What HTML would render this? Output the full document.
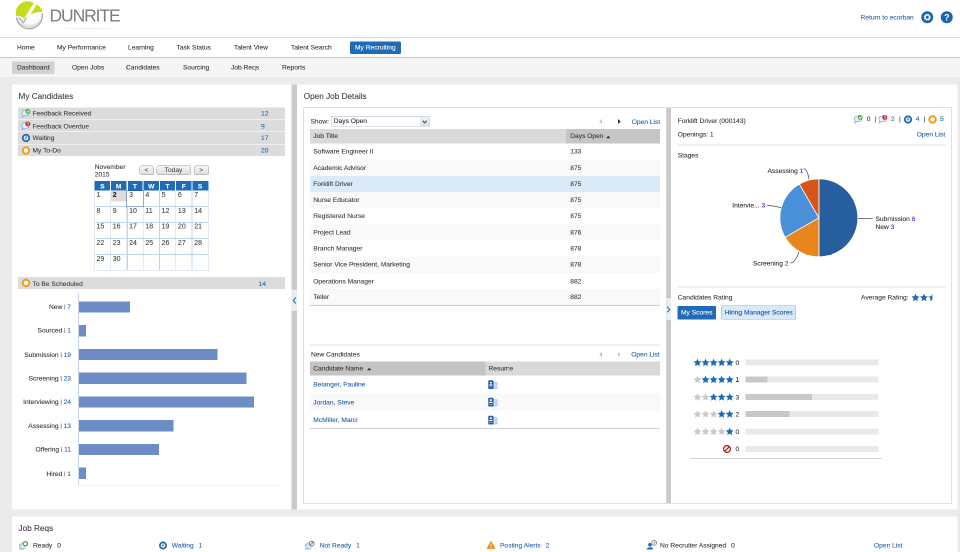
<!DOCTYPE html>
<html lang="en">
<head>
<meta charset="utf-8">
<title>DUNRITE - My Recruiting</title>
<style>
html,body{margin:0;padding:0;width:960px;height:552px;overflow:hidden;background:#ebebeb;}
body{font-family:"Liberation Sans",Arial,sans-serif;}
#root{position:absolute;left:0;top:0;width:1920px;height:1104px;transform:scale(.5);transform-origin:0 0;will-change:transform;
  font-size:13.3px;color:#3a3a3a;background:#ebebeb;overflow:hidden;}
#root *{box-sizing:border-box;}
.abs{position:absolute;}
.t{position:absolute;white-space:nowrap;line-height:16px;-webkit-text-stroke:0.18px;}
a,.lnk{color:#1f5ea8;text-decoration:none;}
/* header */
#hdr{left:0;top:0;width:1920px;height:74px;background:#fff;}
#nav1{left:0;top:74px;width:1920px;height:41.800px;background:#fff;border-top:2px solid #dcdcdc;border-bottom:1.500px solid #8f8f8f;}
#nav2{left:0;top:115.800px;width:1920px;height:38.200px;background:#f5f5f5;}
.n1{color:#343434;}
.n2{color:#343434;}
.panel{background:#fff;}
.row{position:absolute;left:36px;width:534px;height:23.600px;background:#dcdcdc;}
.row .t{top:4px;}
.ibox{border:2px solid #e0e0e0;background:#fff;}
.split{background:#c9c9c9;}
.title{font-size:16.4px;color:#404040;line-height:22px;}
.hl{background:#d9d9d9;height:2px;}
.calbtn{height:18.500px;border:1.500px solid #9a9a9a;border-radius:4px;background:linear-gradient(#f6f6f6,#dedede);text-align:center;font-size:13.3px;line-height:15px;color:#333;}
</style>
</head>
<body>
<div id="root">

<!-- HEADER -->
<div id="hdr" class="abs">
  <svg class="abs" style="left:24px;top:0px" width="70" height="64" viewBox="0 0 70 64">
    <defs>
      <radialGradient id="lg" cx="50%" cy="35%" r="62%"><stop offset="0" stop-color="#ffffff"/><stop offset="0.800" stop-color="#fbfbfb"/><stop offset="1" stop-color="#d6d6d6"/></radialGradient>
    </defs>
    <circle cx="34.400" cy="29.200" r="26.200" fill="url(#lg)"/>
    <path d="M9 36 A26 26 0 0 0 60.300 27" fill="none" stroke="#9c9c9c" stroke-width="2.200" stroke-linecap="round"/>
    <path d="M7.800 27 C6.500 14 18 3 30 2.500 C35 2.300 40 3.500 43.500 6 L24.500 37 C20 33 14 31 8.500 32 Z" fill="#c6da1e"/>
    <path d="M36.500 29 L49.500 9 C55.500 12 60 18 60.800 24.500 C52 23.500 44 25.500 36.500 29 Z" fill="#c6da1e"/>
    <path d="M13.500 35.500 L23 45 L29 35.500" fill="none" stroke="#b4b4b4" stroke-width="3" stroke-linejoin="miter"/>
  </svg>
  <div id="brand" class="abs" style="white-space:nowrap;left:99px;top:11px;font-size:35px;line-height:40px;color:#7c7c7c;letter-spacing:-2.2px;">DUNRITE</div>
  <div class="abs" style="left:112px;top:56px;width:130px;height:2px;background:linear-gradient(90deg,rgba(0,0,0,0),rgba(0,0,0,.10),rgba(0,0,0,0));"></div>
  <div class="t lnk" style="left:1721px;top:27px;color:#2a609f;">Return to ecorban</div>
  <svg class="abs" style="left:1842px;top:22px" width="25" height="25" viewBox="0 0 25 25">
    <circle cx="12.500" cy="12.500" r="12" fill="#1e63b0"/>
    <circle cx="12.500" cy="12.500" r="5.200" fill="none" stroke="#fff" stroke-width="3.400" stroke-dasharray="2.700 1.380"/>
    <circle cx="12.500" cy="12.500" r="4.200" fill="none" stroke="#fff" stroke-width="2.200"/>
  </svg>
  <svg class="abs" style="left:1881px;top:22px" width="25" height="25" viewBox="0 0 25 25">
    <circle cx="12.500" cy="12.500" r="12" fill="#1e63b0"/>
    <text x="12.500" y="19" text-anchor="middle" font-family="Liberation Sans, sans-serif" font-weight="bold" font-size="18" fill="#fff">?</text>
  </svg>
</div>

<!-- NAV 1 -->
<div id="nav1" class="abs">
  <div class="t n1" style="top:11px;left:34px">Home</div>
  <div class="t n1" style="top:11px;left:114px">My Performance</div>
  <div class="t n1" style="top:11px;left:256px">Learning</div>
  <div class="t n1" style="top:11px;left:353px">Task Status</div>
  <div class="t n1" style="top:11px;left:468px">Talent View</div>
  <div class="t n1" style="top:11px;left:582px">Talent Search</div>
  <div class="abs" style="left:700px;top:7px;width:102px;height:25px;background:#1e6bb8;border-radius:3px;"></div>
  <div class="t n1" style="top:11px;left:710px;color:#fff;">My Recruiting</div>
</div>

<!-- NAV 2 -->
<div id="nav2" class="abs">
  <div class="abs" style="left:24px;top:7px;width:85px;height:25px;background:#d2d2d2;border-radius:2px;"></div>
  <div class="t n2" style="top:11px;left:34px">Dashboard</div>
  <div class="t n2" style="top:11px;left:144px">Open Jobs</div>
  <div class="t n2" style="top:11px;left:252px">Candidates</div>
  <div class="t n2" style="top:11px;left:366px">Sourcing</div>
  <div class="t n2" style="top:11px;left:462px">Job Reqs</div>
  <div class="t n2" style="top:11px;left:564px">Reports</div>
</div>

<!-- LEFT PANEL -->
<div id="left" class="abs panel" style="left:24px;top:169px;width:559px;height:850px;">
<div class="t title" style="left:13px;top:12px;">My Candidates</div>
<div class="row" style="left:12px;top:46px;"><svg class="abs" style="left:5px;top:1px" width="22" height="21" viewBox="0 0 22 21"><path d="M3 9.500 C3 5.500 6.500 4 10 4 C14.500 4 17 6.500 17 10 C17 14 13.500 15.500 10 15.500 C9 15.500 8 15.400 7.200 15.100 L3.500 18 L4.600 14 C3.500 13 3 11.500 3 9.500 Z" fill="#e3eefa" stroke="#7fa9d8" stroke-width="1.500"/><circle cx="14.600" cy="6.800" r="4.900" fill="#4cab2d"/><path d="M12.300 6.600 L14.300 8.600 L17.700 4.700" fill="none" stroke="#fff" stroke-width="1.800"/></svg><div class="t" style="left:29px;top:4px;">Feedback Received</div><div class="t lnk" style="left:486px;top:4px;">12</div></div>
<div class="row" style="left:12px;top:70.5px;"><svg class="abs" style="left:5px;top:1px" width="22" height="21" viewBox="0 0 22 21"><path d="M3 9.500 C3 5.500 6.500 4 10 4 C14.500 4 17 6.500 17 10 C17 14 13.500 15.500 10 15.500 C9 15.500 8 15.400 7.200 15.100 L3.500 18 L4.600 14 C3.500 13 3 11.500 3 9.500 Z" fill="#e3eefa" stroke="#7fa9d8" stroke-width="1.500"/><circle cx="14.600" cy="6.800" r="4.900" fill="#c9211e"/><rect x="14.100" y="3" width="1.900" height="4.400" fill="#fff"/><rect x="14.100" y="8.300" width="1.900" height="1.800" fill="#fff"/></svg><div class="t" style="left:29px;top:5.5px;">Feedback Overdue</div><div class="t lnk" style="left:486px;top:5.5px;">9</div></div>
<div class="row" style="left:12px;top:95px;"><svg class="abs" style="left:6px;top:2px" width="20" height="20" viewBox="0 0 20 20"><circle cx="10" cy="10" r="6.500" fill="#eef5fc" stroke="#2563a8" stroke-width="3.500"/><path d="M10.300 6 L10.300 10.600 L7.500 10.600" fill="none" stroke="#2563a8" stroke-width="1.700"/></svg><div class="t" style="left:29px;top:4px;">Waiting</div><div class="t lnk" style="left:486px;top:4px;">17</div></div>
<div class="row" style="left:12px;top:119.5px;"><svg class="abs" style="left:6px;top:2px" width="20" height="20" viewBox="0 0 20 20"><circle cx="10" cy="10" r="6.500" fill="#fff" stroke="#f39a1a" stroke-width="3.800"/></svg><div class="t" style="left:29px;top:4.5px;">My To-Do</div><div class="t lnk" style="left:486px;top:4.5px;">20</div></div>
<div class="t" style="left:165.500px;top:157px;color:#363636;">November</div>
<div class="t" style="left:165.500px;top:171.500px;color:#363636;">2015</div>
<div class="abs calbtn" style="left:254.5px;top:162px;width:29px;">&lt;</div>
<div class="abs calbtn" style="left:288.5px;top:162px;width:69px;">Today</div>
<div class="abs calbtn" style="left:363.5px;top:162px;width:30px;">&gt;</div>
<div class="abs" style="left:164.5px;top:193px;width:228.500px;height:19px;background:#1e6bb8;"></div>
<div class="t" style="left:164.5px;top:195.5px;width:32.5714px;text-align:center;color:#fff;font-weight:bold;font-size:13.300px;">S</div>
<div class="t" style="left:197.071px;top:195.5px;width:32.5714px;text-align:center;color:#fff;font-weight:bold;font-size:13.300px;">M</div>
<div class="abs" style="left:196.071px;top:193px;width:2px;height:19px;background:#fff;"></div>
<div class="t" style="left:229.643px;top:195.5px;width:32.5714px;text-align:center;color:#fff;font-weight:bold;font-size:13.300px;">T</div>
<div class="abs" style="left:228.643px;top:193px;width:2px;height:19px;background:#fff;"></div>
<div class="t" style="left:262.214px;top:195.5px;width:32.5714px;text-align:center;color:#fff;font-weight:bold;font-size:13.300px;">W</div>
<div class="abs" style="left:261.214px;top:193px;width:2px;height:19px;background:#fff;"></div>
<div class="t" style="left:294.786px;top:195.5px;width:32.5714px;text-align:center;color:#fff;font-weight:bold;font-size:13.300px;">T</div>
<div class="abs" style="left:293.786px;top:193px;width:2px;height:19px;background:#fff;"></div>
<div class="t" style="left:327.357px;top:195.5px;width:32.5714px;text-align:center;color:#fff;font-weight:bold;font-size:13.300px;">F</div>
<div class="abs" style="left:326.357px;top:193px;width:2px;height:19px;background:#fff;"></div>
<div class="t" style="left:359.929px;top:195.5px;width:32.5714px;text-align:center;color:#fff;font-weight:bold;font-size:13.300px;">S</div>
<div class="abs" style="left:358.929px;top:193px;width:2px;height:19px;background:#fff;"></div>
<div class="abs" style="left:164.5px;top:212px;width:229px;height:159.5px;border:1.500px solid #c3d4ea;border-top:none;"></div>
<div class="abs" style="left:196.571px;top:212px;width:1.500px;height:159.5px;background:#c3d4ea;"></div>
<div class="abs" style="left:229.143px;top:212px;width:1.500px;height:159.5px;background:#c3d4ea;"></div>
<div class="abs" style="left:261.714px;top:212px;width:1.500px;height:159.5px;background:#c3d4ea;"></div>
<div class="abs" style="left:294.286px;top:212px;width:1.500px;height:159.5px;background:#c3d4ea;"></div>
<div class="abs" style="left:326.857px;top:212px;width:1.500px;height:159.5px;background:#c3d4ea;"></div>
<div class="abs" style="left:359.429px;top:212px;width:1.500px;height:159.5px;background:#c3d4ea;"></div>
<div class="abs" style="left:164.5px;top:243.4px;width:228px;height:1.500px;background:#c3d4ea;"></div>
<div class="abs" style="left:164.5px;top:275.3px;width:228px;height:1.500px;background:#c3d4ea;"></div>
<div class="abs" style="left:164.5px;top:307.2px;width:228px;height:1.500px;background:#c3d4ea;"></div>
<div class="abs" style="left:164.5px;top:339.1px;width:228px;height:1.500px;background:#c3d4ea;"></div>
<div class="abs" style="left:198.071px;top:212.5px;width:31.0714px;height:21.5px;background:#dcdcdc;"></div>
<div class="abs" style="left:228.643px;top:211.5px;width:34.5714px;height:33.4px;border:1.600px solid #2c5897;background:#fff;"></div>
<div class="t" style="left:169px;top:211.5px;font-size:14px;color:#444;">1</div>
<div class="t" style="left:201.571px;top:211.5px;font-size:14px;color:#444;font-weight:bold;color:#222;">2</div>
<div class="t" style="left:234.143px;top:211.5px;font-size:14px;color:#444;">3</div>
<div class="t" style="left:266.714px;top:211.5px;font-size:14px;color:#444;">4</div>
<div class="t" style="left:299.286px;top:211.5px;font-size:14px;color:#444;">5</div>
<div class="t" style="left:331.857px;top:211.5px;font-size:14px;color:#444;">6</div>
<div class="t" style="left:364.429px;top:211.5px;font-size:14px;color:#444;">7</div>
<div class="t" style="left:169px;top:244.4px;font-size:14px;color:#444;">8</div>
<div class="t" style="left:201.571px;top:244.4px;font-size:14px;color:#444;">9</div>
<div class="t" style="left:234.143px;top:244.4px;font-size:14px;color:#444;">10</div>
<div class="t" style="left:266.714px;top:244.4px;font-size:14px;color:#444;">11</div>
<div class="t" style="left:299.286px;top:244.4px;font-size:14px;color:#444;">12</div>
<div class="t" style="left:331.857px;top:244.4px;font-size:14px;color:#444;">13</div>
<div class="t" style="left:364.429px;top:244.4px;font-size:14px;color:#444;">14</div>
<div class="t" style="left:169px;top:275.3px;font-size:14px;color:#444;">15</div>
<div class="t" style="left:201.571px;top:275.3px;font-size:14px;color:#444;">16</div>
<div class="t" style="left:234.143px;top:275.3px;font-size:14px;color:#444;">17</div>
<div class="t" style="left:266.714px;top:275.3px;font-size:14px;color:#444;">18</div>
<div class="t" style="left:299.286px;top:275.3px;font-size:14px;color:#444;">19</div>
<div class="t" style="left:331.857px;top:275.3px;font-size:14px;color:#444;">20</div>
<div class="t" style="left:364.429px;top:275.3px;font-size:14px;color:#444;">21</div>
<div class="t" style="left:169px;top:308.2px;font-size:14px;color:#444;">22</div>
<div class="t" style="left:201.571px;top:308.2px;font-size:14px;color:#444;">23</div>
<div class="t" style="left:234.143px;top:308.2px;font-size:14px;color:#444;">24</div>
<div class="t" style="left:266.714px;top:308.2px;font-size:14px;color:#444;">25</div>
<div class="t" style="left:299.286px;top:308.2px;font-size:14px;color:#444;">26</div>
<div class="t" style="left:331.857px;top:308.2px;font-size:14px;color:#444;">27</div>
<div class="t" style="left:364.429px;top:308.2px;font-size:14px;color:#444;">28</div>
<div class="t" style="left:169px;top:340.1px;font-size:14px;color:#444;">29</div>
<div class="t" style="left:201.571px;top:340.1px;font-size:14px;color:#444;">30</div>
<div class="row" style="left:12px;top:385px;height:23.500px;"><svg class="abs" style="left:6px;top:2px" width="20" height="20" viewBox="0 0 20 20"><circle cx="10" cy="10" r="6.500" fill="#fff" stroke="#f39a1a" stroke-width="3.800"/></svg><div class="t" style="left:29px;top:5.500px;">To Be Scheduled</div><div class="t lnk" style="left:481px;top:5.500px;">14</div></div>
<div class="abs" style="left:132px;top:417px;width:1.500px;height:385px;background:#c9d6e8;"></div>
<div class="abs" style="left:132px;top:800.500px;width:406px;height:1.500px;background:#d5deeb;"></div>
<div class="abs" style="left:133.500px;top:433.6px;width:102.2px;height:22.400px;background:#6c8dc5;"></div>
<div class="t" style="right:441px;top:436.8px;color:#333;">New <span style="font-size:10px;position:relative;top:-1px;">|</span> <span class="lnk">7</span></div>
<div class="abs" style="left:133.500px;top:481.15px;width:14.6px;height:22.400px;background:#6c8dc5;"></div>
<div class="t" style="right:441px;top:484.35px;color:#333;">Sourced <span style="font-size:10px;position:relative;top:-1px;">|</span> <span class="lnk">1</span></div>
<div class="abs" style="left:133.500px;top:528.7px;width:277.4px;height:22.400px;background:#6c8dc5;"></div>
<div class="t" style="right:441px;top:532.9px;color:#333;">Submission <span style="font-size:10px;position:relative;top:-1px;">|</span> <span class="lnk">19</span></div>
<div class="abs" style="left:133.500px;top:576.25px;width:335.8px;height:22.400px;background:#6c8dc5;"></div>
<div class="t" style="right:441px;top:580.45px;color:#333;">Screening <span style="font-size:10px;position:relative;top:-1px;">|</span> <span class="lnk">23</span></div>
<div class="abs" style="left:133.500px;top:623.8px;width:350.4px;height:22.400px;background:#6c8dc5;"></div>
<div class="t" style="right:441px;top:627px;color:#333;">Interviewing <span style="font-size:10px;position:relative;top:-1px;">|</span> <span class="lnk">24</span></div>
<div class="abs" style="left:133.500px;top:671.35px;width:189.8px;height:22.400px;background:#6c8dc5;"></div>
<div class="t" style="right:441px;top:674.55px;color:#333;">Assessing <span style="font-size:10px;position:relative;top:-1px;">|</span> <span class="lnk">13</span></div>
<div class="abs" style="left:133.500px;top:718.9px;width:160.6px;height:22.400px;background:#6c8dc5;"></div>
<div class="t" style="right:441px;top:722.1px;color:#333;">Offering <span style="font-size:10px;position:relative;top:-1px;">|</span> <span class="lnk">11</span></div>
<div class="abs" style="left:133.500px;top:766.45px;width:14.6px;height:22.400px;background:#6c8dc5;"></div>
<div class="t" style="right:441px;top:770.65px;color:#333;">Hired <span style="font-size:10px;position:relative;top:-1px;">|</span> <span class="lnk">1</span></div>
</div>

<!-- SPLITTER 1 -->
<div class="abs split" style="left:583px;top:169px;width:11px;height:850px;"></div>
<div class="abs" style="left:583px;top:578px;width:11px;height:45px;background:#ececec;border-top:1.500px solid #bdbdbd;border-bottom:1.500px solid #bdbdbd;"></div>
<svg class="abs" style="left:584px;top:592px" width="10" height="18" viewBox="0 0 10 18"><path d="M7.500 3 L2.500 9 L7.500 15" fill="none" stroke="#1e6bb8" stroke-width="2"/></svg>
<!-- MIDDLE PANEL -->
<div id="mid" class="abs panel" style="left:594px;top:169px;width:1321px;height:850px;"></div>
<div class="t title" style="left:607.500px;top:181px;">Open Job Details</div>
<div class="abs ibox" style="left:606px;top:214px;width:728px;height:794px;"></div>
<div class="t" style="left:621px;top:234.5px;">Show:</div>
<div class="abs" style="left:662px;top:232px;width:198px;height:21px;border:1.500px solid #c3c8d2;border-top-color:#a9afc2;background:#fff;"></div>
<div class="t" style="left:667.500px;top:234px;color:#2c2c2c;">Days Open</div>
<div class="abs" style="left:841px;top:233.500px;width:17.500px;height:18px;background:linear-gradient(#f1f1f4,#dcdde2);border-left:1px solid #cfd2da;"></div>
<svg class="abs" style="left:843px;top:238.500px" width="13" height="10" viewBox="0 0 13 10"><path d="M2.500 2.500 L6.500 6.800 L10.500 2.500" fill="none" stroke="#34508c" stroke-width="2.400"/></svg>
<svg class="abs" style="left:1195px;top:236px" width="12" height="14" viewBox="0 0 12 14"><path d="M9 2 L3.500 7 L9 12 Z" fill="#c4c4c4"/></svg>
<svg class="abs" style="left:1233px;top:236px" width="12" height="14" viewBox="0 0 12 14"><path d="M3 2 L8.500 7 L3 12 Z" fill="#333"/></svg>
<div class="t lnk" style="left:1263.500px;top:235.8px;">Open List</div>
<div class="abs" style="left:620px;top:258.300px;width:511.500px;height:28.800px;background:#d9d9d9;"></div>
<div class="abs" style="left:1131.500px;top:258.300px;width:188.500px;height:28.800px;background:#c5c5c5;"></div>
<div class="t" style="left:626.500px;top:264px;color:#363636;">Job Title</div>
<div class="t" style="left:1140.500px;top:264px;color:#363636;">Days Open</div>
<svg class="abs" style="left:1211px;top:270px" width="11" height="8" viewBox="0 0 11 8"><path d="M1 6.500 L5.500 1.500 L10 6.500 Z" fill="#333"/></svg>
<div class="abs" style="left:620px;top:286.90px;width:700px;height:32.36px;background:#fff;"></div>
<div class="t" style="left:626.500px;top:294.90px;color:#3a3a3a;">Software Engineer II</div>
<div class="t" style="left:1140.500px;top:294.90px;color:#3a3a3a;">133</div>
<div class="abs" style="left:620px;top:319.26px;width:700px;height:32.36px;background:#f9f9f9;"></div>
<div class="t" style="left:626.500px;top:328.26px;color:#3a3a3a;">Academic Advisor</div>
<div class="t" style="left:1140.500px;top:328.26px;color:#3a3a3a;">875</div>
<div class="abs" style="left:620px;top:351.62px;width:700px;height:32.36px;background:#dbeaf9;"></div>
<div class="t" style="left:626.500px;top:359.62px;color:#3a3a3a;">Forklift Driver</div>
<div class="t" style="left:1140.500px;top:359.62px;color:#3a3a3a;">875</div>
<div class="abs" style="left:620px;top:383.98px;width:700px;height:32.36px;background:#f9f9f9;"></div>
<div class="t" style="left:626.500px;top:391.98px;color:#3a3a3a;">Nurse Educator</div>
<div class="t" style="left:1140.500px;top:391.98px;color:#3a3a3a;">875</div>
<div class="abs" style="left:620px;top:416.34px;width:700px;height:32.36px;background:#fff;"></div>
<div class="t" style="left:626.500px;top:424.34px;color:#3a3a3a;">Registered Nurse</div>
<div class="t" style="left:1140.500px;top:424.34px;color:#3a3a3a;">875</div>
<div class="abs" style="left:620px;top:448.70px;width:700px;height:32.36px;background:#f9f9f9;"></div>
<div class="t" style="left:626.500px;top:456.70px;color:#3a3a3a;">Project Lead</div>
<div class="t" style="left:1140.500px;top:456.70px;color:#3a3a3a;">876</div>
<div class="abs" style="left:620px;top:481.06px;width:700px;height:32.36px;background:#fff;"></div>
<div class="t" style="left:626.500px;top:489.06px;color:#3a3a3a;">Branch Manager</div>
<div class="t" style="left:1140.500px;top:489.06px;color:#3a3a3a;">878</div>
<div class="abs" style="left:620px;top:513.42px;width:700px;height:32.36px;background:#f9f9f9;"></div>
<div class="t" style="left:626.500px;top:521.42px;color:#3a3a3a;">Senior Vice President, Marketing</div>
<div class="t" style="left:1140.500px;top:521.42px;color:#3a3a3a;">878</div>
<div class="abs" style="left:620px;top:545.78px;width:700px;height:32.36px;background:#fff;"></div>
<div class="t" style="left:626.500px;top:554.78px;color:#3a3a3a;">Operations Manager</div>
<div class="t" style="left:1140.500px;top:554.78px;color:#3a3a3a;">882</div>
<div class="abs" style="left:620px;top:578.14px;width:700px;height:32.36px;background:#f9f9f9;"></div>
<div class="t" style="left:626.500px;top:586.14px;color:#3a3a3a;">Teller</div>
<div class="t" style="left:1140.500px;top:586.14px;color:#3a3a3a;">882</div>
<div class="abs" style="left:620px;top:610px;width:700px;height:2px;background:#cfcfcf;"></div>
<div class="abs" style="left:620px;top:689px;width:700px;height:2px;background:#dedede;"></div>
<div class="t" style="left:622px;top:700.500px;color:#363636;">New Candidates</div>
<svg class="abs" style="left:1195px;top:701.5px" width="12" height="14" viewBox="0 0 12 14"><path d="M9 2 L3.500 7 L9 12 Z" fill="#bdbdbd"/></svg>
<svg class="abs" style="left:1233px;top:701.5px" width="12" height="14" viewBox="0 0 12 14"><path d="M3 2 L8.500 7 L3 12 Z" fill="#c9c9c9"/></svg>
<div class="t lnk" style="left:1262.500px;top:700.5px;">Open List</div>
<div class="abs" style="left:620px;top:722.500px;width:351px;height:28.500px;background:#c3c3c3;"></div>
<div class="abs" style="left:971px;top:722.500px;width:349px;height:28.500px;background:#d9d9d9;"></div>
<div class="t" style="left:626.500px;top:729.200px;color:#363636;">Candidate Name</div>
<svg class="abs" style="left:733px;top:734px" width="11" height="8" viewBox="0 0 11 8"><path d="M1 6.500 L5.500 1.500 L10 6.500 Z" fill="#333"/></svg>
<div class="t" style="left:977px;top:729.200px;color:#363636;">Resume</div>
<div class="abs" style="left:620px;top:751.00px;width:700px;height:35.500px;background:#fff;"></div>
<div class="t lnk" style="left:626.500px;top:761.3px;">Belanger, Pauline</div>
<svg class="abs" style="left:975.500px;top:759.50px" width="20" height="20" viewBox="0 0 20 20"><rect x="9" y="3.500" width="9.800" height="14.300" rx="1" fill="#a2c5ef"/><rect x="12.300" y="5" width="1.300" height="11.500" fill="#e9f1fb"/><rect x="15.300" y="5" width="1.300" height="11.500" fill="#e9f1fb"/><rect x="0.500" y="0.500" width="10.500" height="17.500" rx="1.600" fill="#2560b0"/><circle cx="5.700" cy="5.300" r="2" fill="#fff"/><rect x="2.500" y="8.800" width="6.500" height="2.300" fill="#fff"/><rect x="2.500" y="13.300" width="6.500" height="1.200" fill="#8fb4e6"/></svg>
<div class="abs" style="left:620px;top:786.50px;width:700px;height:35.500px;background:#f9f9f9;"></div>
<div class="t lnk" style="left:626.500px;top:796.8px;">Jordan, Steve</div>
<svg class="abs" style="left:975.500px;top:795.00px" width="20" height="20" viewBox="0 0 20 20"><rect x="9" y="3.500" width="9.800" height="14.300" rx="1" fill="#a2c5ef"/><rect x="12.300" y="5" width="1.300" height="11.500" fill="#e9f1fb"/><rect x="15.300" y="5" width="1.300" height="11.500" fill="#e9f1fb"/><rect x="0.500" y="0.500" width="10.500" height="17.500" rx="1.600" fill="#2560b0"/><circle cx="5.700" cy="5.300" r="2" fill="#fff"/><rect x="2.500" y="8.800" width="6.500" height="2.300" fill="#fff"/><rect x="2.500" y="13.300" width="6.500" height="1.200" fill="#8fb4e6"/></svg>
<div class="abs" style="left:620px;top:822.00px;width:700px;height:35.500px;background:#fff;"></div>
<div class="t lnk" style="left:626.500px;top:832.3px;">McMiller, Marci</div>
<svg class="abs" style="left:975.500px;top:830.50px" width="20" height="20" viewBox="0 0 20 20"><rect x="9" y="3.500" width="9.800" height="14.300" rx="1" fill="#a2c5ef"/><rect x="12.300" y="5" width="1.300" height="11.500" fill="#e9f1fb"/><rect x="15.300" y="5" width="1.300" height="11.500" fill="#e9f1fb"/><rect x="0.500" y="0.500" width="10.500" height="17.500" rx="1.600" fill="#2560b0"/><circle cx="5.700" cy="5.300" r="2" fill="#fff"/><rect x="2.500" y="8.800" width="6.500" height="2.300" fill="#fff"/><rect x="2.500" y="13.300" width="6.500" height="1.200" fill="#8fb4e6"/></svg>
<div class="abs" style="left:620px;top:856px;width:700px;height:2px;background:#cfcfcf;"></div>
<div class="abs split" style="left:1332.500px;top:215px;width:9.500px;height:792px;"></div>
<div class="abs" style="left:1332.500px;top:595px;width:9.500px;height:45.500px;background:#ececec;border-top:1.500px solid #bdbdbd;border-bottom:1.500px solid #bdbdbd;"></div>
<svg class="abs" style="left:1332px;top:610px" width="10" height="18" viewBox="0 0 10 18"><path d="M2.500 3.500 L7.500 9 L2.500 14.500" fill="none" stroke="#1e6bb8" stroke-width="2"/></svg>
<!-- RIGHT BOX -->
<div class="abs ibox" style="left:1342px;top:214px;width:562px;height:794px;border-left:none;"></div>
<div class="t" style="left:1355.500px;top:234px;color:#363636;">Forklift Driver (000143)</div>
<div class="t" style="left:1355.500px;top:260.700px;color:#363636;">Openings: 1</div>
<div class="t lnk" style="left:1833.500px;top:261px;">Open List</div>
<div class="abs" style="left:1355px;top:289px;width:536px;height:2px;background:#dedede;"></div>
<div class="t" style="left:1355.500px;top:303.2px;color:#363636;">Stages</div>
<svg class="abs" style="left:1706px;top:228px" width="22" height="21" viewBox="0 0 22 21"><path d="M3 9.500 C3 5.500 6.500 4 10 4 C14.500 4 17 6.500 17 10 C17 14 13.500 15.500 10 15.500 C9 15.500 8 15.400 7.200 15.100 L3.500 18 L4.600 14 C3.500 13 3 11.500 3 9.500 Z" fill="#e3eefa" stroke="#7fa9d8" stroke-width="1.500"/><circle cx="14.600" cy="6.800" r="4.900" fill="#4cab2d"/><path d="M12.300 6.600 L14.300 8.600 L17.700 4.700" fill="none" stroke="#fff" stroke-width="1.800"/></svg>
<div class="t" style="left:1733.500px;top:230.3px;color:#363636;">0</div>
<div class="t" style="left:1749px;top:229.5px;color:#333;">|</div>
<svg class="abs" style="left:1755px;top:228px" width="22" height="21" viewBox="0 0 22 21"><path d="M3 9.500 C3 5.500 6.500 4 10 4 C14.500 4 17 6.500 17 10 C17 14 13.500 15.500 10 15.500 C9 15.500 8 15.400 7.200 15.100 L3.500 18 L4.600 14 C3.500 13 3 11.500 3 9.500 Z" fill="#e3eefa" stroke="#7fa9d8" stroke-width="1.500"/><circle cx="14.600" cy="6.800" r="4.900" fill="#c9211e"/><rect x="14.100" y="3" width="1.900" height="4.400" fill="#fff"/><rect x="14.100" y="8.300" width="1.900" height="1.800" fill="#fff"/></svg>
<div class="t lnk" style="left:1782px;top:230.3px;">2</div>
<div class="t" style="left:1798px;top:229.5px;color:#333;">|</div>
<svg class="abs" style="left:1806px;top:228.500px" width="20" height="20" viewBox="0 0 20 20"><circle cx="10" cy="10" r="6.500" fill="#eef5fc" stroke="#2563a8" stroke-width="3.500"/><path d="M10.300 6 L10.300 10.600 L7.500 10.600" fill="none" stroke="#2563a8" stroke-width="1.700"/></svg>
<div class="t lnk" style="left:1831.500px;top:230.3px;">4</div>
<div class="t" style="left:1847px;top:229.5px;color:#333;">|</div>
<svg class="abs" style="left:1855px;top:228.500px" width="20" height="20" viewBox="0 0 20 20"><circle cx="10" cy="10" r="6.500" fill="#fff" stroke="#f39a1a" stroke-width="3.800"/></svg>
<div class="t lnk" style="left:1880px;top:230.3px;">5</div>
<svg class="abs" style="left:1341px;top:300px" width="563" height="270" viewBox="1341 300 563 270">
<path d="M1637.80 435.60 L1637.80 357.60 A78 78 0 0 1 1637.80 513.60 Z" fill="#265e9e" stroke="#fff" stroke-width="1.600" stroke-linejoin="round"/>
<path d="M1637.80 435.60 L1637.80 513.60 A78 78 0 0 1 1570.25 474.60 Z" fill="#e8851c" stroke="#fff" stroke-width="1.600" stroke-linejoin="round"/>
<path d="M1637.80 435.60 L1570.25 474.60 A78 78 0 0 1 1598.80 368.05 Z" fill="#4a90d9" stroke="#fff" stroke-width="1.600" stroke-linejoin="round"/>
<path d="M1637.80 435.60 L1598.80 368.05 A78 78 0 0 1 1637.80 357.60 Z" fill="#d4561a" stroke="#fff" stroke-width="1.600" stroke-linejoin="round"/>
<path d="M1716 437 L1745 437" fill="none" stroke="#444" stroke-width="1.400"/>
<path d="M1607 337.500 C1613 337.500 1616 345 1618 359" fill="none" stroke="#444" stroke-width="1.400"/>
<path d="M1534 410 L1562 415" fill="none" stroke="#444" stroke-width="1.400"/>
<path d="M1581 526 Q1590 526 1598 504" fill="none" stroke="#444" stroke-width="1.400"/>
</svg>
<div class="t" style="left:1751px;top:429.500px;color:#2c2c2c;">Submission <span style="color:#3333dd">6</span></div>
<div class="t" style="left:1751px;top:446px;color:#2c2c2c;">New <span style="color:#3333dd">3</span></div>
<div class="t" style="left:1535px;top:334px;color:#2c2c2c;">Assessing <span style="color:#3333dd">1</span></div>
<div class="t" style="left:1464.500px;top:402.500px;color:#2c2c2c;">Intervie... <span style="color:#3333dd">3</span></div>
<div class="t" style="left:1506px;top:519px;color:#2c2c2c;">Screening <span style="color:#3333dd">2</span></div>
<div class="abs" style="left:1355px;top:572.500px;width:536px;height:2px;background:#dedede;"></div>
<div class="t" style="left:1355.500px;top:587px;color:#363636;">Candidates Rating</div>
<div class="t" style="left:1722px;top:587px;color:#363636;">Average Rating:</div>
<svg class="abs" style="left:1822.500px;top:587px" width="52" height="18" viewBox="0 0 52 18"><path d="M8.00 0.30 L10.35 5.36 L15.89 6.04 L11.80 9.84 L12.88 15.31 L8.00 12.60 L3.12 15.31 L4.20 9.84 L0.11 6.04 L5.65 5.36 Z" fill="#1e6bb8"/><path transform="translate(16.900 0)" d="M8.00 0.30 L10.35 5.36 L15.89 6.04 L11.80 9.84 L12.88 15.31 L8.00 12.60 L3.12 15.31 L4.20 9.84 L0.11 6.04 L5.65 5.36 Z" fill="#1e6bb8"/><path transform="translate(33.800 0)" d="M8.00 0.30 L8.00 12.60 L3.12 15.31 L4.20 9.84 L0.11 6.04 L5.65 5.36 Z" fill="#1e6bb8"/></svg>
<div class="abs" style="left:1355px;top:611.500px;width:77px;height:27px;background:#1e6bb8;border-radius:2px;"></div>
<div class="t" style="left:1362px;top:617px;color:#fff;">My Scores</div>
<div class="abs" style="left:1441.500px;top:611px;width:150.500px;height:28px;background:#d8e9fa;border:1.500px solid #82b3e6;border-radius:3px;"></div>
<div class="t" style="left:1449.500px;top:617px;color:#1d4f8c;">Hiring Manager Scores</div>
<div class="abs" style="left:1490.500px;top:718.80px;width:266.500px;height:12px;background:#e9e9e9;"></div>
<div class="t" style="left:1471px;top:717.8px;color:#363636;font-size:13.300px;">0</div>
<svg class="abs" style="left:1386.500px;top:716.60px" width="82" height="18" viewBox="0 0 82 18"><path transform="translate(0 0)" d="M8.00 0.30 L10.35 5.36 L15.89 6.04 L11.80 9.84 L12.88 15.31 L8.00 12.60 L3.12 15.31 L4.20 9.84 L0.11 6.04 L5.65 5.36 Z" fill="#1e6bb8"/><path transform="translate(16.1 0)" d="M8.00 0.30 L10.35 5.36 L15.89 6.04 L11.80 9.84 L12.88 15.31 L8.00 12.60 L3.12 15.31 L4.20 9.84 L0.11 6.04 L5.65 5.36 Z" fill="#1e6bb8"/><path transform="translate(32.2 0)" d="M8.00 0.30 L10.35 5.36 L15.89 6.04 L11.80 9.84 L12.88 15.31 L8.00 12.60 L3.12 15.31 L4.20 9.84 L0.11 6.04 L5.65 5.36 Z" fill="#1e6bb8"/><path transform="translate(48.3 0)" d="M8.00 0.30 L10.35 5.36 L15.89 6.04 L11.80 9.84 L12.88 15.31 L8.00 12.60 L3.12 15.31 L4.20 9.84 L0.11 6.04 L5.65 5.36 Z" fill="#1e6bb8"/><path transform="translate(64.4 0)" d="M8.00 0.30 L10.35 5.36 L15.89 6.04 L11.80 9.84 L12.88 15.31 L8.00 12.60 L3.12 15.31 L4.20 9.84 L0.11 6.04 L5.65 5.36 Z" fill="#1e6bb8"/></svg>
<div class="abs" style="left:1490.500px;top:753.36px;width:266.500px;height:12px;background:#e9e9e9;"></div>
<div class="abs" style="left:1490.500px;top:753.36px;width:44.40px;height:12px;background:#c8c8c8;"></div>
<div class="t" style="left:1471px;top:751.36px;color:#363636;font-size:13.300px;">1</div>
<svg class="abs" style="left:1386.500px;top:751.16px" width="82" height="18" viewBox="0 0 82 18"><path transform="translate(0 0)" d="M8.00 0.30 L10.35 5.36 L15.89 6.04 L11.80 9.84 L12.88 15.31 L8.00 12.60 L3.12 15.31 L4.20 9.84 L0.11 6.04 L5.65 5.36 Z" fill="#c9c9c9"/><path transform="translate(16.1 0)" d="M8.00 0.30 L10.35 5.36 L15.89 6.04 L11.80 9.84 L12.88 15.31 L8.00 12.60 L3.12 15.31 L4.20 9.84 L0.11 6.04 L5.65 5.36 Z" fill="#1e6bb8"/><path transform="translate(32.2 0)" d="M8.00 0.30 L10.35 5.36 L15.89 6.04 L11.80 9.84 L12.88 15.31 L8.00 12.60 L3.12 15.31 L4.20 9.84 L0.11 6.04 L5.65 5.36 Z" fill="#1e6bb8"/><path transform="translate(48.3 0)" d="M8.00 0.30 L10.35 5.36 L15.89 6.04 L11.80 9.84 L12.88 15.31 L8.00 12.60 L3.12 15.31 L4.20 9.84 L0.11 6.04 L5.65 5.36 Z" fill="#1e6bb8"/><path transform="translate(64.4 0)" d="M8.00 0.30 L10.35 5.36 L15.89 6.04 L11.80 9.84 L12.88 15.31 L8.00 12.60 L3.12 15.31 L4.20 9.84 L0.11 6.04 L5.65 5.36 Z" fill="#1e6bb8"/></svg>
<div class="abs" style="left:1490.500px;top:787.92px;width:266.500px;height:12px;background:#e9e9e9;"></div>
<div class="abs" style="left:1490.500px;top:787.92px;width:133.20px;height:12px;background:#c8c8c8;"></div>
<div class="t" style="left:1471px;top:786.92px;color:#363636;font-size:13.300px;">3</div>
<svg class="abs" style="left:1386.500px;top:785.72px" width="82" height="18" viewBox="0 0 82 18"><path transform="translate(0 0)" d="M8.00 0.30 L10.35 5.36 L15.89 6.04 L11.80 9.84 L12.88 15.31 L8.00 12.60 L3.12 15.31 L4.20 9.84 L0.11 6.04 L5.65 5.36 Z" fill="#c9c9c9"/><path transform="translate(16.1 0)" d="M8.00 0.30 L10.35 5.36 L15.89 6.04 L11.80 9.84 L12.88 15.31 L8.00 12.60 L3.12 15.31 L4.20 9.84 L0.11 6.04 L5.65 5.36 Z" fill="#c9c9c9"/><path transform="translate(32.2 0)" d="M8.00 0.30 L10.35 5.36 L15.89 6.04 L11.80 9.84 L12.88 15.31 L8.00 12.60 L3.12 15.31 L4.20 9.84 L0.11 6.04 L5.65 5.36 Z" fill="#1e6bb8"/><path transform="translate(48.3 0)" d="M8.00 0.30 L10.35 5.36 L15.89 6.04 L11.80 9.84 L12.88 15.31 L8.00 12.60 L3.12 15.31 L4.20 9.84 L0.11 6.04 L5.65 5.36 Z" fill="#1e6bb8"/><path transform="translate(64.4 0)" d="M8.00 0.30 L10.35 5.36 L15.89 6.04 L11.80 9.84 L12.88 15.31 L8.00 12.60 L3.12 15.31 L4.20 9.84 L0.11 6.04 L5.65 5.36 Z" fill="#1e6bb8"/></svg>
<div class="abs" style="left:1490.500px;top:822.48px;width:266.500px;height:12px;background:#e9e9e9;"></div>
<div class="abs" style="left:1490.500px;top:822.48px;width:88.80px;height:12px;background:#c8c8c8;"></div>
<div class="t" style="left:1471px;top:821.48px;color:#363636;font-size:13.300px;">2</div>
<svg class="abs" style="left:1386.500px;top:820.28px" width="82" height="18" viewBox="0 0 82 18"><path transform="translate(0 0)" d="M8.00 0.30 L10.35 5.36 L15.89 6.04 L11.80 9.84 L12.88 15.31 L8.00 12.60 L3.12 15.31 L4.20 9.84 L0.11 6.04 L5.65 5.36 Z" fill="#c9c9c9"/><path transform="translate(16.1 0)" d="M8.00 0.30 L10.35 5.36 L15.89 6.04 L11.80 9.84 L12.88 15.31 L8.00 12.60 L3.12 15.31 L4.20 9.84 L0.11 6.04 L5.65 5.36 Z" fill="#c9c9c9"/><path transform="translate(32.2 0)" d="M8.00 0.30 L10.35 5.36 L15.89 6.04 L11.80 9.84 L12.88 15.31 L8.00 12.60 L3.12 15.31 L4.20 9.84 L0.11 6.04 L5.65 5.36 Z" fill="#c9c9c9"/><path transform="translate(48.3 0)" d="M8.00 0.30 L10.35 5.36 L15.89 6.04 L11.80 9.84 L12.88 15.31 L8.00 12.60 L3.12 15.31 L4.20 9.84 L0.11 6.04 L5.65 5.36 Z" fill="#1e6bb8"/><path transform="translate(64.4 0)" d="M8.00 0.30 L10.35 5.36 L15.89 6.04 L11.80 9.84 L12.88 15.31 L8.00 12.60 L3.12 15.31 L4.20 9.84 L0.11 6.04 L5.65 5.36 Z" fill="#1e6bb8"/></svg>
<div class="abs" style="left:1490.500px;top:857.04px;width:266.500px;height:12px;background:#e9e9e9;"></div>
<div class="t" style="left:1471px;top:856.04px;color:#363636;font-size:13.300px;">0</div>
<svg class="abs" style="left:1386.500px;top:854.84px" width="82" height="18" viewBox="0 0 82 18"><path transform="translate(0 0)" d="M8.00 0.30 L10.35 5.36 L15.89 6.04 L11.80 9.84 L12.88 15.31 L8.00 12.60 L3.12 15.31 L4.20 9.84 L0.11 6.04 L5.65 5.36 Z" fill="#c9c9c9"/><path transform="translate(16.1 0)" d="M8.00 0.30 L10.35 5.36 L15.89 6.04 L11.80 9.84 L12.88 15.31 L8.00 12.60 L3.12 15.31 L4.20 9.84 L0.11 6.04 L5.65 5.36 Z" fill="#c9c9c9"/><path transform="translate(32.2 0)" d="M8.00 0.30 L10.35 5.36 L15.89 6.04 L11.80 9.84 L12.88 15.31 L8.00 12.60 L3.12 15.31 L4.20 9.84 L0.11 6.04 L5.65 5.36 Z" fill="#c9c9c9"/><path transform="translate(48.3 0)" d="M8.00 0.30 L10.35 5.36 L15.89 6.04 L11.80 9.84 L12.88 15.31 L8.00 12.60 L3.12 15.31 L4.20 9.84 L0.11 6.04 L5.65 5.36 Z" fill="#c9c9c9"/><path transform="translate(64.4 0)" d="M8.00 0.30 L10.35 5.36 L15.89 6.04 L11.80 9.84 L12.88 15.31 L8.00 12.60 L3.12 15.31 L4.20 9.84 L0.11 6.04 L5.65 5.36 Z" fill="#1e6bb8"/></svg>
<div class="abs" style="left:1490.500px;top:891.60px;width:266.500px;height:12px;background:#e9e9e9;"></div>
<div class="t" style="left:1471px;top:889.60px;color:#363636;font-size:13.300px;">0</div>
<svg class="abs" style="left:1445px;top:888.60px" width="18" height="18" viewBox="0 0 18 18"><circle cx="9" cy="9" r="6.800" fill="#fff" stroke="#b5121b" stroke-width="2.400"/><path d="M4.500 13.500 L13.500 4.500" stroke="#b5121b" stroke-width="2.400"/></svg>
<div class="abs" style="left:1381px;top:915.500px;width:382px;height:2px;background:#d4d4d4;"></div>
<!-- BOTTOM PANEL -->
<div id="bot" class="abs panel" style="left:24px;top:1033px;width:1891px;height:80px;"></div>
<div class="t title" style="left:37px;top:1044.5px;">Job Reqs</div>
<svg class="abs" style="left:36px;top:1080px" width="22" height="20" viewBox="0 0 22 20"><rect x="3" y="8.500" width="8" height="10" fill="#dbe8f7" stroke="#8db3df" stroke-width="1.300"/><rect x="6" y="6" width="8" height="10.500" fill="#e6f0fb" stroke="#8db3df" stroke-width="1.300"/><circle cx="14.800" cy="7.400" r="4.200" fill="#fff" stroke="#55a630" stroke-width="2.600"/></svg>
<div class="t" style="left:66px;top:1083px;color:#333;">Ready<span style="margin-left:10px">0</span></div>
<svg class="abs" style="left:316px;top:1080.500px" width="20" height="20" viewBox="0 0 20 20"><circle cx="10" cy="10" r="6.300" fill="#eef5fc" stroke="#2563a8" stroke-width="3.300"/><path d="M10.300 6 L10.300 10.600 L7.500 10.600" fill="none" stroke="#2563a8" stroke-width="1.700"/></svg>
<div class="t lnk" style="left:343.500px;top:1083px;">Waiting<span style="margin-left:10px">1</span></div>
<svg class="abs" style="left:608px;top:1080px" width="22" height="20" viewBox="0 0 22 20"><rect x="3" y="8.500" width="8" height="10" fill="#dbe8f7" stroke="#8db3df" stroke-width="1.300"/><rect x="6" y="6" width="8" height="10.500" fill="#e6f0fb" stroke="#8db3df" stroke-width="1.300"/><circle cx="15.300" cy="7.200" r="4.800" fill="#fff" stroke="#7a7a7a" stroke-width="2"/><path d="M12.100 10.400 L18.500 4" stroke="#7a7a7a" stroke-width="1.800"/></svg>
<div class="t lnk" style="left:639.500px;top:1083px;">Not Ready<span style="margin-left:10px">1</span></div>
<svg class="abs" style="left:972px;top:1080px" width="20" height="20" viewBox="0 0 20 20"><path d="M10 2.300 L18.200 17 L1.800 17 Z" fill="#ee8d14" stroke="#e07f0c" stroke-width="1" stroke-linejoin="round"/><rect x="9.100" y="7" width="1.800" height="5.500" fill="#fff"/><rect x="9.100" y="13.500" width="1.800" height="1.800" fill="#fff"/></svg>
<div class="t lnk" style="left:1000px;top:1083px;">Posting Alerts<span style="margin-left:10px">2</span></div>
<svg class="abs" style="left:1292px;top:1079px" width="24" height="22" viewBox="0 0 24 22"><circle cx="8" cy="10.500" r="3.600" fill="#2166b8"/><path d="M1.500 20 C1.500 14 14.500 14 14.500 20 Z" fill="#2166b8"/><circle cx="16.500" cy="6.500" r="5" fill="#fff" stroke="#8a8a8a" stroke-width="1.600"/><text x="16.500" y="10" text-anchor="middle" font-family="Liberation Sans, sans-serif" font-weight="bold" font-size="9" fill="#555">?</text></svg>
<div class="t" style="left:1320px;top:1083px;color:#333;">No Recruiter Assigned<span style="margin-left:10px">0</span></div>
<div class="t lnk" style="left:1748px;top:1083px;">Open List</div>

</div>
</body>
</html>
